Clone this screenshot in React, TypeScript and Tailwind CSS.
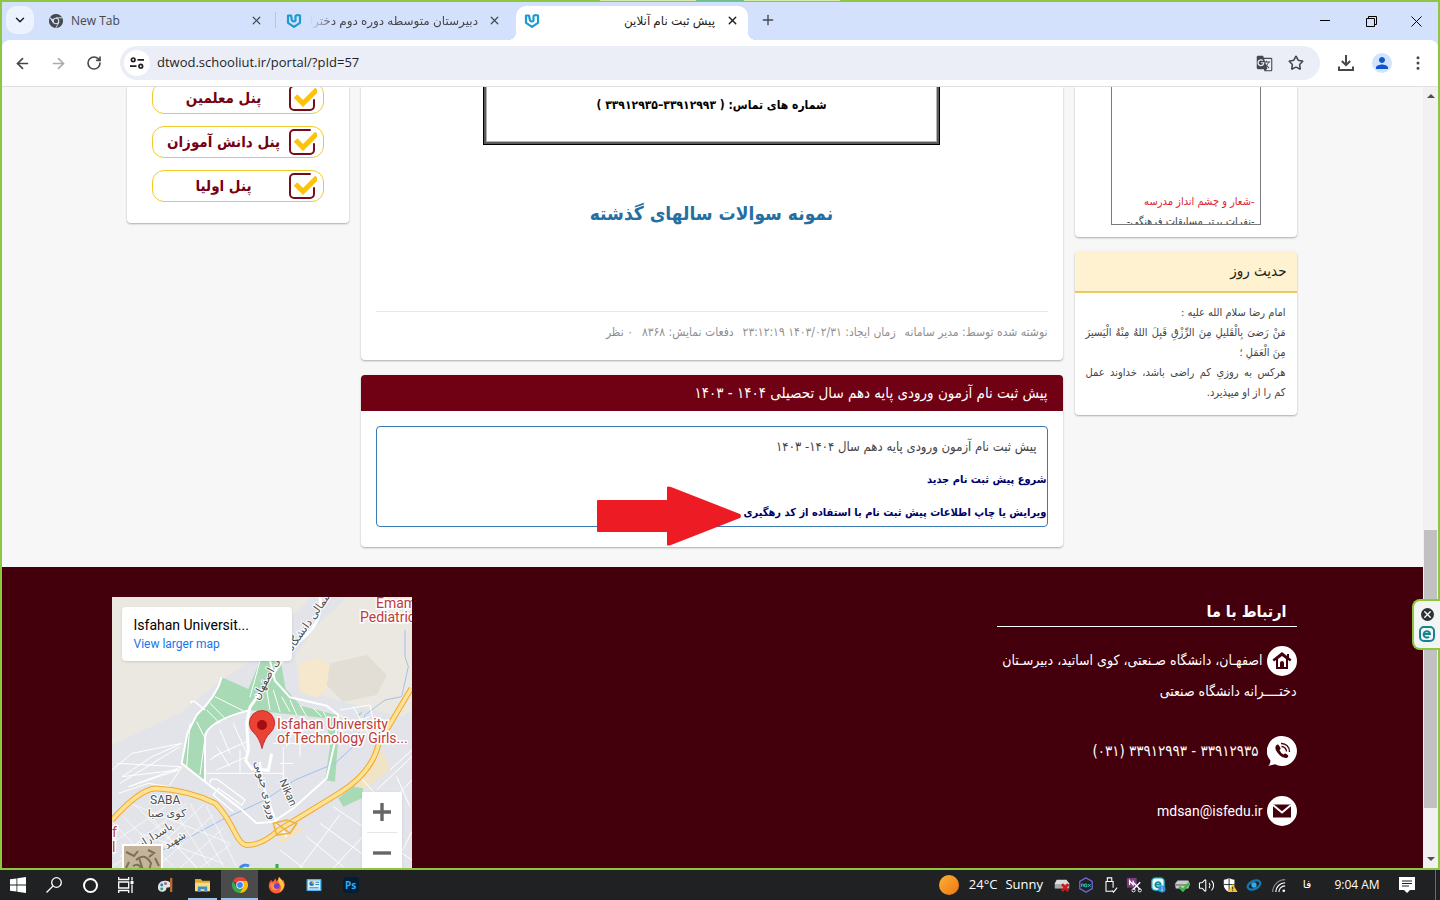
import type { ReactNode } from "react";
import {
  ArrowLeft,
  ArrowRight,
  ChevronDown,
  EllipsisVertical,
  Plus,
  RotateCw,
  Star,
  Volume2,
  X,
} from "lucide-react";
import { MdGTranslate, MdPerson } from "react-icons/md";

const PANELS = ["پنل معلمین", "پنل دانش آموزان", "پنل اولیا"];

const POST_META = [
  "نوشته شده توسط: مدیر سامانه",
  "زمان ایجاد: ۱۴۰۳/۰۲/۳۱ ۲۳:۱۲:۱۹",
  "دفعات نمایش: ۸۳۶۸",
  "۰ نظر",
];

function SchoolLogo() {
  return (
    <svg viewBox="0 0 16 16" className="size-4 shrink-0" fill="none" stroke="#1d9bd1" strokeWidth="2.2" strokeLinejoin="round" strokeLinecap="round">
      <path d="M5 2.500 2 2.500v7.300L8 13.800l6-4V2.500L11.500 2 9.500 3V7.500q-1.500 2-3.500 0L5 2.500" />
    </svg>
  );
}

function ChromeLogo({ mono = false, className }: { mono?: boolean; className: string }) {
  const [red, yellow, green, blue] = mono
    ? ["#474a4f", "#474a4f", "#474a4f", "#474a4f"]
    : ["#ea4335", "#fbbc05", "#34a853", "#4285f4"];
  return (
    <svg viewBox="0 0 24 24" className={className}>
      <path d="M12 12 1.6 6A12 12 0 0 1 22.4 6z" fill={red} />
      <path d="M12 12V6h10.4A12 12 0 0 1 12 24z" fill={yellow} />
      <path d="M12 12 17.2 15 12 24A12 12 0 0 1 1.6 6L6.8 15z" fill={green} />
      {mono && <path d="M12 6.5h10.6M7.2 14.8 1.9 6M16.8 14.8 11.6 24" stroke="#d3e1fc" strokeWidth="1.6" />}
      <circle cx="12" cy="12" r="5.6" fill={mono ? "#d3e1fc" : "#fff"} />
      <circle cx="12" cy="12" r={mono ? "3.8" : "4.4"} fill={blue} />
    </svg>
  );
}

function TabStrip() {
  return (
    <div className="flex h-[38px] shrink-0 items-end bg-[#d3e1fc] pl-1 text-xs text-[#45474b]">
      <button type="button" aria-label="Search tabs" className="mb-1.5 flex size-7 items-center justify-center rounded-[10px] bg-[#ecf2fe] text-[#1f1f1f]">
        <ChevronDown size={14} strokeWidth={2.5} />
      </button>
      <div className="ml-[7px] flex h-[34px] w-[234px] items-center pb-1.5 pl-2 pr-[11px] pt-px">
        <ChromeLogo mono className="size-[14px]" />
        <span className="ml-2 flex-1">New Tab</span>
        <button type="button" aria-label="Close tab" className="flex size-4 items-center justify-center">
          <X size={13} strokeWidth={2.2} />
        </button>
      </div>
      <span className="mb-3 h-4 w-px bg-[#a8c7fa]" />
      <div className="flex h-[34px] w-[240px] items-center pb-1.5 pl-[10px] pr-[14px] pt-px">
        <SchoolLogo />
        <span dir="rtl" className="ml-2 mr-2 flex-1 overflow-hidden whitespace-nowrap [mask-image:linear-gradient(to_right,transparent,black_24px)]">
          دبیرستان متوسطه دوره دوم دخترانه
        </span>
        <button type="button" aria-label="Close tab" className="flex size-4 items-center justify-center">
          <X size={13} strokeWidth={2.2} />
        </button>
      </div>
      <div className="relative flex h-[34px] w-[232px] items-center rounded-t-[10px] bg-white px-2 pb-1.5 pt-px text-[#1f1f1f]">
        <span className="absolute -left-2 bottom-0 size-2 bg-[radial-gradient(circle_at_top_left,transparent_8px,white_8px)]" />
        <span className="absolute -right-2 bottom-0 size-2 bg-[radial-gradient(circle_at_top_right,transparent_8px,white_8px)]" />
        <SchoolLogo />
        <span dir="rtl" className="mr-[9px] flex-1">
          پیش ثبت نام آنلاین
        </span>
        <button type="button" aria-label="Close tab" className="flex size-4 items-center justify-center">
          <X size={13} strokeWidth={2.5} />
        </button>
      </div>
      <button type="button" aria-label="New tab" className="mb-3 ml-3 flex size-4 items-center justify-center">
        <Plus size={16} />
      </button>
      <div className="ml-auto flex h-full text-black">
        <button type="button" aria-label="Minimize" className="flex w-[46px] items-center justify-center">
          <svg viewBox="0 0 10 10" className="size-[10px]" stroke="currentColor"><path d="M0 4.500h10" /></svg>
        </button>
        <button type="button" aria-label="Restore" className="flex w-[46px] items-center justify-center">
          <svg viewBox="0 0 11 11" className="size-[11px]" fill="none" stroke="currentColor"><path d="M.5 2.500h8v8h-8zM2.500 2.500v-2h8v8h-2" /></svg>
        </button>
        <button type="button" aria-label="Close window" className="flex w-11 items-center justify-center">
          <svg viewBox="0 0 11 11" className="size-[11px]" stroke="currentColor"><path d="m.5.5 10 10M10.500.5l-10 10" /></svg>
        </button>
      </div>
    </div>
  );
}

function ToolButton({ label, children }: { label: string; children: ReactNode }) {
  return (
    <button type="button" aria-label={label} className="flex w-9 shrink-0 items-center justify-center text-[#45474b]">
      {children}
    </button>
  );
}

function Toolbar() {
  return (
    <div className="shrink-0 bg-[#d3e1fc]">
      <div className="flex h-[47px] rounded-t-lg border-b border-[#dfe0e3] bg-white px-0.5 py-1.5">
        <ToolButton label="Back"><ArrowLeft size={17} strokeWidth={2.4} /></ToolButton>
        <ToolButton label="Forward"><ArrowRight size={17} strokeWidth={2.4} className="text-[#ababab]" /></ToolButton>
        <ToolButton label="Reload"><RotateCw size={16} strokeWidth={2.4} /></ToolButton>
        <div className="mx-2 flex flex-1 items-center rounded-full bg-[#ebeef7] pl-1 pr-3">
          <button type="button" aria-label="Site information" className="flex size-[26px] items-center justify-center rounded-full bg-white">
            <svg viewBox="0 0 14 12" className="h-3 w-[14px]" fill="none" stroke="#1f1f1f" strokeWidth="1.7">
              <circle cx="3.2" cy="2.8" r="1.8" />
              <path d="M7.5 2.8H14M0 9.2h6.5" />
              <circle cx="10.8" cy="9.2" r="1.8" />
            </svg>
          </button>
          <input
            aria-label="Address"
            defaultValue="dtwod.schooliut.ir/portal/?pId=57"
            className="ml-[7px] flex-1 bg-transparent text-[13px] text-[#1f1f1f] outline-none"
          />
          <button type="button" aria-label="Translate" className="flex w-8 justify-center text-[#45474b]"><MdGTranslate size={17} /></button>
          <button type="button" aria-label="Bookmark" className="-mr-1 flex w-8 justify-center text-[#45474b]"><Star size={16} strokeWidth={2.4} /></button>
        </div>
        <ToolButton label="Downloads">
          <svg viewBox="0 0 16 16" className="size-4" fill="none" stroke="currentColor" strokeWidth="2"><path d="M8 0v10M3.800 6 8 10.200l4.200-4.200M1 11.500V15h14v-3.500" /></svg>
        </ToolButton>
        <ToolButton label="Profile">
          <span className="flex size-5 items-center justify-center rounded-full bg-[#d3e3fd] text-[#0b57d0]"><MdPerson size={18} /></span>
        </ToolButton>
        <ToolButton label="Menu"><EllipsisVertical size={18} /></ToolButton>
      </div>
    </div>
  );
}

function CheckIcon() {
  return (
    <svg viewBox="0 0 28 28" className="size-7 shrink-0" fill="none">
      <path d="M21 2H5a4 4 0 0 0-4 4v16a4 4 0 0 0 4 4h16a4 4 0 0 0 4-4v-6" stroke="#750d1c" strokeWidth="2" strokeLinecap="round" />
      <path d="m6.500 12 7.500 7.500L28 5.500" stroke="#fdc30a" strokeWidth="5" />
    </svg>
  );
}

function PanelsCard() {
  return (
    <div className="overflow-hidden rounded-b bg-white px-[25px] pb-[21px] shadow-[0_1px_2px_rgba(0,0,0,0.3)]">
      <div className="-mt-[5px] flex flex-col gap-3">
        {PANELS.map((name) => (
          <a key={name} href="#" dir="rtl" className="flex h-8 items-center rounded-xl border border-[#f0c92a] px-1.5 text-[#750010]">
            <CheckIcon />
            <span className="flex-1 text-center text-[15px] font-bold leading-5">{name}</span>
          </a>
        ))}
      </div>
    </div>
  );
}

function PostCard() {
  return (
    <article className="rounded-b bg-white px-[15px] pb-[19px] shadow-[0_1px_2px_rgba(0,0,0,0.3)]">
      <div className="mx-auto flex h-[58px] max-w-[457px] border border-t-0 border-black">
        <div className="flex w-full border-x-2 border-b-2 border-[#5a5a5a]">
          <div className="w-full border-x border-b border-[#b5b5b5] pt-1.5 text-center text-xs font-bold leading-6 text-black">
            شماره های تماس: ( ۳۳۹۱۲۹۹۳–۳۳۹۱۲۹۳۵ )
          </div>
        </div>
      </div>
      <h2 className="pt-12 text-center text-[19px] font-bold leading-10 text-[#256fa1]">
        <a href="#">نمونه سوالات سالهای گذشته</a>
      </h2>
      <div className="mt-[78px] flex gap-[9px] border-t border-[#e8e8e8] pt-[11px] text-xs leading-[18px] text-[#8f8f8f]">
        {POST_META.map((item) => (
          <span key={item}>{item}</span>
        ))}
      </div>
    </article>
  );
}

function RegisterCard() {
  return (
    <article className="overflow-hidden rounded bg-white shadow-[0_1px_2px_rgba(0,0,0,0.3)]">
      <h3 className="bg-[#700013] px-[15px] py-1.5 text-[15px] leading-6 text-white">
        پیش ثبت نام آزمون ورودی پایه دهم سال تحصیلی ۱۴۰۴ - ۱۴۰۳
      </h3>
      <div className="px-[15px] pb-5 pt-[15px]">
        <div className="relative rounded border border-[#3a7ab0] pb-px pt-2 text-[11px] leading-6">
          <p className="px-[10px] text-[13px] leading-6 text-[#444]">پیش ثبت نام آزمون ورودی پایه دهم سال ۱۴۰۴- ۱۴۰۳</p>
          <a href="#" className="mt-[9px] block font-bold text-[#000066]">شروع پیش ثبت نام جدید</a>
          <a href="#" className="mt-[9px] block font-bold text-[#000066]">ویرایش یا چاپ اطلاعات پیش ثبت نام با استفاده از کد رهگیری</a>
          <svg viewBox="0 0 144 60" className="absolute -bottom-5 right-[306px] h-[60px] w-36">
            <path d="M1 14h69V1q1-1 4 0l69 27q2 2 0 4L74 59q-3 1-4 0V46H1q-1 0-1-1V15q0-1 1-1z" fill="#ed1c24" />
          </svg>
        </div>
      </div>
    </article>
  );
}

function SideCards() {
  return (
    <>
      <div className="rounded-b bg-white px-9 pb-3 shadow-[0_1px_2px_rgba(0,0,0,0.3)]">
        <div className="h-[138px] overflow-hidden border border-t-0 border-[#7b7b7b] px-[5px] pt-[105px] text-[11px] leading-5">
          <a href="#" className="block text-[#d9252f]">-شعار و چشم انداز مدرسه</a>
          <a href="#" className="block whitespace-nowrap text-[#444]">-نفرات برتر مسابقات فرهنگی-</a>
        </div>
      </div>
      <div className="mt-[14px] overflow-hidden rounded bg-white shadow-[0_1px_2px_rgba(0,0,0,0.3)]">
        <h3 className="border-b-2 border-[#e9c866] bg-[#fef2d0] px-[10px] py-2 text-[15px] leading-6 text-[#222]">حدیث روز</h3>
        <div className="px-[11px] pb-3 pt-[10px] text-justify text-[11px] leading-5 text-[#444]">
          <p>امام رضا سلام الله علیه :</p>
          <p>مَنْ رَضىَ بِالْقَليلِ مِنَ الرِّزْقِ قَبِلَ اللهُ مِنْهُ الْيَسيرَ مِنَ الْعَمَلِ ؛</p>
          <p>
            هرکس به روزیِ کم راضی باشد، خداوند عمل{" "}
            <span className="whitespace-nowrap">کم را از او میپذیرد.</span>
          </p>
        </div>
      </div>
    </>
  );
}

function MapWidget() {
  return (
    <div className="relative h-[271px] w-[300px] overflow-hidden bg-[#e2e4e9] font-['Roboto',sans-serif]" dir="ltr">
      <svg viewBox="0 0 300 271" className="h-[271px] w-[300px]">
        <g transform="scale(0.33333) translate(-36 -21)" fill="none">
          <path d="M36 21h600L540 110 470 200 350 280 240 370 36 465z" fill="#ebe8e1" />
          <path d="M740 21h196v340l-30 20-120-30-110-30-80-40-10-80 60-90z" fill="#ebe8e1" />
          <path d="m600 220 60-15 60 50-70 70-50-20z" fill="#f5e8cc" />
          <path d="m690 220 110-25 60 60-30 60-100 20-50-50z" fill="#e2ded5" />
          <path d="m850 480 20 60-80 60-30-20zM590 700l20 20-60 40-20-10z" fill="#f1e3c6" />

          <path d="M365 262 445 297 480 212H542L557 297 602 347 717 377 715 440 705 575 675 570 690 470 680 385 450 360 350 400 318 430 315 573 245 520 262 430 290 375 335 325z" fill="#a8dab5" />
          <path d="m760 590 30 5-5 30-55 25-15-25zM770 375l20-12-10 15z" fill="#a8dab5" />

          {/* water */}
          <path d="M915 120v80l10 30-20 90-50 10-60 45-30 90-60 55-120 50-90 60-130 60-150 80-60 20" stroke="#a3bfec" strokeWidth="3" />

          {/* minor streets */}
          <g stroke="#fff" strokeWidth="3">
            <path d="m345 320 90 45M330 340l50 50M320 360l40 40M290 395l25 50-15 110M270 400l-10 130M480 212l-30 110M500 300l10 60M520 300l20 65M545 320l25 45M570 330l20 45M600 345l20 35M640 355l25 25M670 365l15 30" />
            <path d="M320 550h230M340 500l110-50M350 540l90-40M360 420l30 70M400 400l40 90M420 480v70M550 470v100M520 460h130M560 430v40M600 440v60M540 520h40M350 470l40 60M330 510l30-20" />
            <path d="M330 580q0-20 25-10l80 60-10 15-70-50-15 20 60 50M275 340q-5-10 10-5l30 25" strokeWidth="4" />
            <path d="m36 540 60-50 150-30-90 40-90 60 170-20-150 50 160-60-40 60-60-10-90 30M60 580l180-110M50 520l190 10" />
            <path d="m720 360 90-15 10 50-40 30-60-50M760 350l50 90M740 400l70-20" />
            <path d="m870 540 66-60M830 600l106-100M780 560l80 90M850 660l86-90M890 560l40 90M700 650l236 160M660 700l180 130M620 740l110 90M700 834l140-150M600 834l120-160M880 834l56-110M540 780l70 54" />
            <path d="m40 700 130 134M70 680l150 150M110 650l180 180M160 690l130 144M220 660l110 170M270 640l100 190M320 650l90 180M36 760l160-110M60 800l200-160M110 834l200-190M170 834l170-160M240 834l130-120M300 834l90-70M36 830l60-40M120 730l250 90M90 640l300 120" strokeWidth="2" />
          </g>
          <path d="M660 21q10 80-60 130-40 45-60 70-40 60-90 130l-10 50 5 80-8 30 18 25 50 5 10-50" stroke="#fff" strokeWidth="9" />
          <path d="M365 262Q350 320 290 375L262 430 245 520l70 55 105 80 50 45 50-5 60-40 100-90 25-110 10-80-35-28-110-25-45-50-15-60M450 360Q320 395 315 440V575M480 515l5 60 45 125 30 40" stroke="#fff" strokeWidth="6" />

          <path d="M36 690q80-90 130-95 100 5 180 45 30 30 60 90 20 40 40 35 40 0 90-45l180-110q100-60 120-150l98-165" stroke="#f0a82e" strokeWidth="17" />
          <path d="M36 690q80-90 130-95 100 5 180 45 30 30 60 90 20 40 40 35 40 0 90-45l180-110q100-60 120-150l98-165" stroke="#fde293" strokeWidth="11" />
          <path d="m520 700 40-10 30 10-20 30-40 5zM530 700l40 30" stroke="#f0b345" strokeWidth="5" />
          <path d="M486 476q-8-32-25-48a38 38 0 1 1 50 0q-17 16-25 48z" fill="#ea4335" stroke="#b31412" strokeWidth="2" />
          <circle cx="486" cy="405" r="15" fill="#a50e0e" />
        </g>
        <g fontSize="14" fill="#c03a3a" stroke="#fff" strokeWidth="3" paintOrder="stroke">
          <text x="264" y="11">Emam</text>
          <text x="248" y="25">Pediatric</text>
          <text x="165" y="132">Isfahan University</text>
          <text x="165" y="146">of Technology Girls...</text>
          <text x="0" y="240">f</text>
          <text x="0" y="255">l</text>
        </g>
        <g fontSize="11" fill="#4a4d52" stroke="#fff" strokeWidth="2" paintOrder="stroke" fontFamily="Roboto, 'DejaVu Sans', sans-serif">
          <text x="38" y="207" fontSize="12">SABA</text>
          <text x="55" y="220" textAnchor="middle">کوی صبا</text>
          <text transform="translate(167 184) rotate(66)">Nikan</text>
          <text transform="translate(150 194) rotate(75)" textAnchor="middle">ورودی جنوبی</text>
          <text transform="translate(158 82) rotate(-62)" textAnchor="middle">نی اصفهان</text>
          <text transform="translate(200 26) rotate(-55)" textAnchor="middle">شمالی دانشگاه</text>
          <text transform="translate(44 242) rotate(-32)" textAnchor="middle">پاسداران</text>
          <text transform="translate(65 246) rotate(-32)" textAnchor="middle">شهید</text>
        </g>
        <g fill="none" strokeWidth="3">
          <path d="M128 271a7 7 0 0 1 9-2" stroke="#4285f4" />
          <path d="M165 267v4" stroke="#34a853" />
        </g>
      </svg>
      <div className="absolute left-[10px] top-[10px] h-[54px] w-[170px] rounded-sm bg-white px-3 py-[9px] shadow">
        <p className="text-sm leading-[18px] text-black">Isfahan Universit...</p>
        <a href="#" className="block text-xs leading-5 text-[#1a73e8]">View larger map</a>
      </div>
      <div className="absolute left-[250px] top-[195px] flex h-[81px] w-10 flex-col items-center bg-white text-[#666] shadow">
        <button type="button" aria-label="Zoom in" className="flex h-10 w-full items-center justify-center">
          <svg viewBox="0 0 18 18" className="size-[18px]" fill="currentColor"><path d="M7.300 0h3.400v7.300H18v3.400h-7.300V18H7.300v-7.300H0V7.300h7.300z" /></svg>
        </button>
        <span className="h-px w-[30px] bg-[#e6e6e6]" />
        <button type="button" aria-label="Zoom out" className="flex h-10 w-full items-center justify-center">
          <svg viewBox="0 0 18 18" className="size-[18px]" fill="currentColor"><path d="M0 7.300h18v3.400H0z" /></svg>
        </button>
      </div>
      <button type="button" aria-label="Satellite view" className="absolute left-[10px] top-[247px] h-10 w-[41px] overflow-hidden border-2 border-white bg-[#c4b49b]">
        <svg viewBox="0 0 37 36" className="size-full" fill="none" stroke="#7d7059" strokeWidth="2"><path d="m2 6 8 4 4-5M24 4l6 3-5 4M12 14q8-8 15 3l-3 12M9 20q6-4 9 4M15 12l4 12M5 16l-3 6M31 12l4 8" /></svg>
      </button>
    </div>
  );
}

function Contact() {
  return (
    <address className="w-[300px] text-sm not-italic leading-[30px] text-white">
      <h4 className="border-b border-white px-[10px] text-base font-bold leading-[29px]">ارتباط با ما</h4>
      <div className="mt-[18px]">
        <svg viewBox="0 0 30 30" className="inline-block size-[30px]">
          <circle cx="15" cy="15" r="15" fill="#fff" />
          <path d="M15 6 5.500 13.500 7 15.500l2-1.500v9h12v-9l2 1.500 1.500-2L22 11.500V8h-2v2z" fill="#43000c" />
          <path d="M11 13v8h2v-4a2 2 0 0 1 4 0v4h2v-8l-4-3z" fill="#fff" />
        </svg>
        {" "}اصفهـان، دانشگاه صـنعتی، کوی اساتید، دبیرسـتان دختــــرانه دانشگاه صنعتی
      </div>
      <div className="mt-[30px] flex items-center gap-2">
        <svg viewBox="0 0 30 30" className="size-[30px]">
          <path d="M15 0a15 15 0 1 1-7 28.300L1 30q2-1 2.500-5.300A15 15 0 0 1 15 0z" fill="#fff" />
          <path d="M9 9.500q2-2 3 0l1.500 2.500q.5 1-1 2 1 3 4 4.500 1.500-1.500 2.500-.8l2 1.500q1 1.200-.8 2.500-3 1.500-7.500-2.500-6-6-3.700-9.700z" fill="#43000c" />
          <path d="M14 7.500a8 8 0 0 1 8.500 8.500M14.500 10.500a5 5 0 0 1 5 5" fill="none" stroke="#43000c" strokeWidth="1.300" />
        </svg>
        <a href="#" className="text-[15px]">۳۳۹۱۲۹۳۵ - ۳۳۹۱۲۹۹۳ (۰۳۱)</a>
      </div>
      <div className="mt-[30px] flex items-center gap-1">
        <svg viewBox="0 0 30 30" className="size-[30px]">
          <circle cx="15" cy="15" r="15" fill="#fff" />
          <path d="M6 8.500h18v13H6z" fill="#43000c" />
          <path d="m6 9 9 7.500L24 9" fill="none" stroke="#fff" strokeWidth="2" />
        </svg>
        <a href="mailto:mdsan@isfedu.ir" dir="ltr" className="font-['Roboto',sans-serif] text-sm">mdsan@isfedu.ir</a>
      </div>
    </address>
  );
}

function Page() {
  return (
    <div dir="rtl" className="flex flex-1 flex-col overflow-hidden bg-[#f7f7f7] font-['DejaVu_Sans_Condensed','DejaVu_Sans',sans-serif]">
      <main className="mx-auto flex w-full max-w-[1172px] items-start gap-3 pb-5 pr-0.5">
        <aside className="w-[222px] shrink-0"><SideCards /></aside>
        <div className="flex min-w-0 flex-1 flex-col gap-[15px]">
          <PostCard />
          <RegisterCard />
        </div>
        <aside className="w-[222px] shrink-0"><PanelsCard /></aside>
      </main>
      <footer className="flex-1 bg-[#43000c]">
        <div className="mx-auto flex w-full max-w-[1202px] justify-between pr-[17px] pt-[30px]">
          <Contact />
          <MapWidget />
        </div>
      </footer>
    </div>
  );
}

function Scrollbar() {
  return (
    <div className="flex w-[15px] shrink-0 flex-col items-center bg-[#f1f1f1] py-[7px]">
      <svg viewBox="0 0 8 4" className="h-1 w-2" fill="#505050"><path d="M0 4 4 0l4 4z" /></svg>
      <span className="grow-[432]" />
      <span className="w-[13px] grow-[278] bg-[#c1c1c1]" />
      <span className="grow-[49]" />
      <svg viewBox="0 0 8 4" className="h-1 w-2" fill="#505050"><path d="m0 0 4 4 4-4z" /></svg>
    </div>
  );
}

function TrayIcons() {
  const icon = "size-[16px]";
  return (
    <div className="flex *:flex *:w-6 *:items-center *:justify-center">
      <span>
        <svg viewBox="0 0 18 18" className={icon}>
          <path d="M3 3h11l3 4v5H1V7z" fill="#ddd" /><path d="M1 8h16v5H1z" fill="#aaa" /><path d="m9 8 7 8M16 8l-7 8" stroke="#d01818" strokeWidth="3" />
        </svg>
      </span>
      <span>
        <svg viewBox="0 0 18 18" className={icon} fill="none">
          <path d="m9 1 7 4v8l-7 4-7-4V5z" stroke="#6f62d8" strokeWidth="1.500" />
          <path d="M4 11V8h2v3M7.500 8h2.500v3H7.500zM11.500 8l2.500 3m0-3-2.500 3" stroke="#32d6c8" />
        </svg>
      </span>
      <span>
        <svg viewBox="0 0 18 18" className={icon} fill="none" stroke="#fff" strokeWidth="1.200">
          <path d="M6 1h5v4H6zM11 16H4.500V5h8v7M11 15l2 2 4-5" />
        </svg>
      </span>
      <span>
        <svg viewBox="0 0 18 18" className={icon}>
          <path d="M1 1h11v11H1z" fill="#803a80" /><path d="M4 9V4l4 5V4" fill="none" stroke="#fff" strokeWidth="1.400" />
          <path d="m8 6 8 8M16 6l-8 8" stroke="#fff" strokeWidth="1.500" /><circle cx="8.500" cy="15" r="1.800" fill="none" stroke="#fff" /><circle cx="15.500" cy="15" r="1.800" fill="none" stroke="#fff" />
        </svg>
      </span>
      <span>
        <svg viewBox="0 0 18 18" className={icon}>
          <rect x="2" y="1" width="14" height="14" rx="4" fill="#e9fafa" stroke="#19a0b4" strokeWidth="1.500" />
          <path d="M6 8.500h6a3 3 0 1 0-1 2.500" fill="none" stroke="#138a9c" strokeWidth="2" /><circle cx="13.500" cy="13.500" r="4" fill="#2f8fd8" /><path d="M13.500 11v1m0 1v3" stroke="#fff" />
        </svg>
      </span>
      <span>
        <svg viewBox="0 0 18 18" className={icon}>
          <path d="M4 4h12l2 4-2 5H2L1 8z" fill="#c9cccf" /><path d="M1 8h16v2H1z" fill="#888" /><path d="m6 11 4 4 7-8" fill="none" stroke="#3fb93f" strokeWidth="3" />
        </svg>
      </span>
      <span><Volume2 size={17} strokeWidth={1.5} /></span>
      <span>
        <svg viewBox="0 0 18 18" className={icon}>
          <path d="M8 1q3 2 6 2v6q0 5-6 8-6-3-6-8V3q3 0 6-2z" fill="#fff" /><path d="M8 1v16M2 8.500h12" stroke="#1f1f1f" />
          <path d="m12 8 5.500 9h-11z" fill="#f8c51c" /><path d="M12 11v3m0 1v1" stroke="#222" />
        </svg>
      </span>
      <span>
        <svg viewBox="0 0 18 18" className={icon} fill="none">
          <ellipse cx="9" cy="9" rx="7.500" ry="4.500" transform="rotate(-25 9 9)" stroke="#1378b3" strokeWidth="2.500" /><circle cx="9" cy="9" r="3" fill="#37a9e4" />
        </svg>
      </span>
      <span>
        <svg viewBox="0 0 18 18" className={icon} fill="none" stroke="#fff" strokeWidth="1.300">
          <path d="M3 17A14 14 0 0 1 17 3" stroke="#8b8b8b" /><path d="M6.500 17A10.500 10.500 0 0 1 17 6.500M10 17a7 7 0 0 1 7-7" /><circle cx="15.500" cy="15.500" r="1.500" fill="#fff" stroke="none" />
        </svg>
      </span>
    </div>
  );
}

function Taskbar() {
  const app = "flex w-[37px] items-center justify-center";
  return (
    <div className="flex h-[30px] shrink-0 bg-[#202122] text-white">
      <button type="button" aria-label="Start" className="flex w-9 items-center justify-center">
        <svg viewBox="0 0 16 16" className="size-4" fill="#fff"><path d="M0 2.300 6.500 1.400v6.200H0zM7.300 1.300 16 0v7.600H7.300zM0 8.400h6.500v6.200L0 13.700zM7.300 8.400H16V16l-8.700-1.300z" /></svg>
      </button>
      <button type="button" aria-label="Search" className="flex w-9 items-center justify-center">
        <svg viewBox="0 0 16 16" className="size-4" fill="none" stroke="#fff" strokeWidth="1.300"><circle cx="10.500" cy="5.500" r="4.800" /><path d="M7 9 .5 15.500" /></svg>
      </button>
      <button type="button" aria-label="Cortana" className="flex w-9 items-center justify-center">
        <span className="size-[15px] rounded-full border-2 border-white" />
      </button>
      <button type="button" aria-label="Task view" className="flex w-9 items-center justify-center">
        <svg viewBox="0 0 16 16" className="size-4" fill="none" stroke="#fff" strokeWidth="1.300"><path d="M.7 0v2.500h10V0M.7 5h10v6h-10zM.7 16v-2.500h10V16M14 0v3.500M14 7.500V16" /><path d="M12.500 4h3v3h-3z" fill="#fff" stroke="none" /></svg>
      </button>
      <button type="button" aria-label="Paint" className={`${app} ml-[3px]`}>
        <svg viewBox="0 0 18 18" className="size-[17px]">
          <path d="M8 4c5-1 8 3 6 6-1 2-4 0-4 2 0 5-9 5-9-1 0-4 3-7 7-7z" fill="#d7e4ee" />
          <circle cx="5" cy="8.500" r="1.500" fill="#2f78c4" /><circle cx="9" cy="7" r="1.500" fill="#d4483b" /><circle cx="5" cy="12.500" r="1.500" fill="#44a047" />
          <path d="M15 1v15" stroke="#b96a2c" strokeWidth="2.500" />
        </svg>
      </button>
      <button type="button" aria-label="File Explorer" className="mx-1 flex w-[29px] items-center justify-center border-b-2 border-[#9cc4f0] pt-0.5">
        <svg viewBox="0 0 18 16" className="h-[15px] w-[17px]">
          <path d="M1 1h6l2 2h8v11H1z" fill="#e0a82e" /><path d="M1 5h16v9H1z" fill="#fcdc7c" /><path d="M4 9h10v6h-3v-3H7v3H4z" fill="#3e8ed0" />
        </svg>
      </button>
      <button type="button" aria-label="Google Chrome" className={`${app} border-b-2 border-[#9cc4f0] bg-[#4b4b4c] pt-0.5`}>
        <ChromeLogo className="size-4" />
      </button>
      <button type="button" aria-label="Firefox" className={app}>
        <svg viewBox="0 0 18 18" className="size-[17px]">
          <path d="M9 17.500A8.300 8.300 0 0 1 1.500 6q1-2 2-3l.7 2 2-1Q7 2 8 1.500l1 3 2-2q0-1 .7-2.500 1.500 2 3.300 4l1-1q3 4.500.7 9A8.500 8.500 0 0 1 9 17.500z" fill="#ff5f38" />
          <path d="M11.700 0q4 3 5.500 8-.5 6-5 8 3-5 0-9-2.500-3-.5-7z" fill="#ffc73a" />
          <path d="M3 7q3 0 5-.5L6 9q0 4 5 3-2 3-5.500 1.500Q2.500 12 3 7z" fill="#ff9a2e" />
          <circle cx="9.300" cy="9.500" r="3" fill="#7a3fd1" />
        </svg>
      </button>
      <button type="button" aria-label="Control Panel" className={app}>
        <svg viewBox="0 0 16 14" className="h-[13px] w-4">
          <rect width="16" height="13" rx="1" fill="#55b7ee" /><path d="M1.500 1.500h13v10h-13z" fill="#d8f0fc" /><circle cx="5.500" cy="5" r="2.500" fill="#2277bb" /><path d="M5.500 5V2.500A2.500 2.500 0 0 1 8 5z" fill="#f5a623" /><path d="M9.500 3.500h4M9.500 6h4M3 9.500h10" stroke="#2277bb" />
        </svg>
      </button>
      <button type="button" aria-label="Photoshop" className={app}>
        <span className="flex size-4 items-center justify-center rounded-sm bg-[#001e36] text-[10px] font-bold leading-none text-[#31a8ff]">Ps</span>
      </button>

      <div className="ml-auto flex items-center text-[13px]">
        <span className="size-5 rounded-full bg-linear-to-br from-[#fbb034] to-[#ee7410]" />
        <span className="ml-[10px]">24°C</span>
        <span className="ml-2 mr-[7px]">Sunny</span>
        <TrayIcons />
        <span className="w-[34px] text-center font-['DejaVu_Sans',sans-serif] text-[11px]">فا</span>
        <span className="w-[66px] text-center text-xs">9:04 AM</span>
        <button type="button" aria-label="Notifications" className="flex w-[34px] justify-center">
          <svg viewBox="0 0 16 16" className="size-4"><path d="M0 0h16v13h-5l-3 3-3-3H0z" fill="#fff" /><path d="M3 4h10M3 6.500h10M3 9h7" stroke="#202122" /></svg>
        </button>
        <span className="ml-[11px] mr-1 h-[30px] w-px bg-[#6b6b6b]" />
      </div>
    </div>
  );
}

export default function App() {
  return (
    <div className="flex h-screen flex-col overflow-hidden font-['Open_Sans','DejaVu_Sans',sans-serif]">
      <div className="relative flex min-h-0 flex-1 flex-col border-2 border-[#8dc63f]">
        <div className="absolute inset-x-0 -top-0.5 flex h-px justify-center">
          <span className="w-24 bg-[#d3eda8]" />
          <span className="w-12 bg-[#6cc18c]" />
          <span className="w-24 bg-[#d3eda8]" />
        </div>
        <TabStrip />
        <Toolbar />
        <div className="flex min-h-0 flex-1">
          <Page />
          <Scrollbar />
        </div>
        <div className="absolute -right-0.5 top-[597px] flex h-[51px] w-7 flex-col items-center justify-center gap-[5px] rounded-l-lg border-2 border-r-0 border-[#8dc63f] bg-[#f3f5f5]">
          <button type="button" aria-label="Dismiss" className="flex size-[13px] items-center justify-center rounded-full bg-[#2b3137] text-white"><X size={11} strokeWidth={3} /></button>
          <button type="button" aria-label="Assistant" className="flex size-4 items-center justify-center rounded-[5px] border-2 border-[#168391]">
            <svg viewBox="0 0 10 10" className="size-[10px]" fill="none" stroke="#168391" strokeWidth="2"><path d="M1.500 5h6.500a3.200 3.200 0 1 0-1 2.700" /></svg>
          </button>
        </div>
      </div>
      <Taskbar />
    </div>
  );
}
